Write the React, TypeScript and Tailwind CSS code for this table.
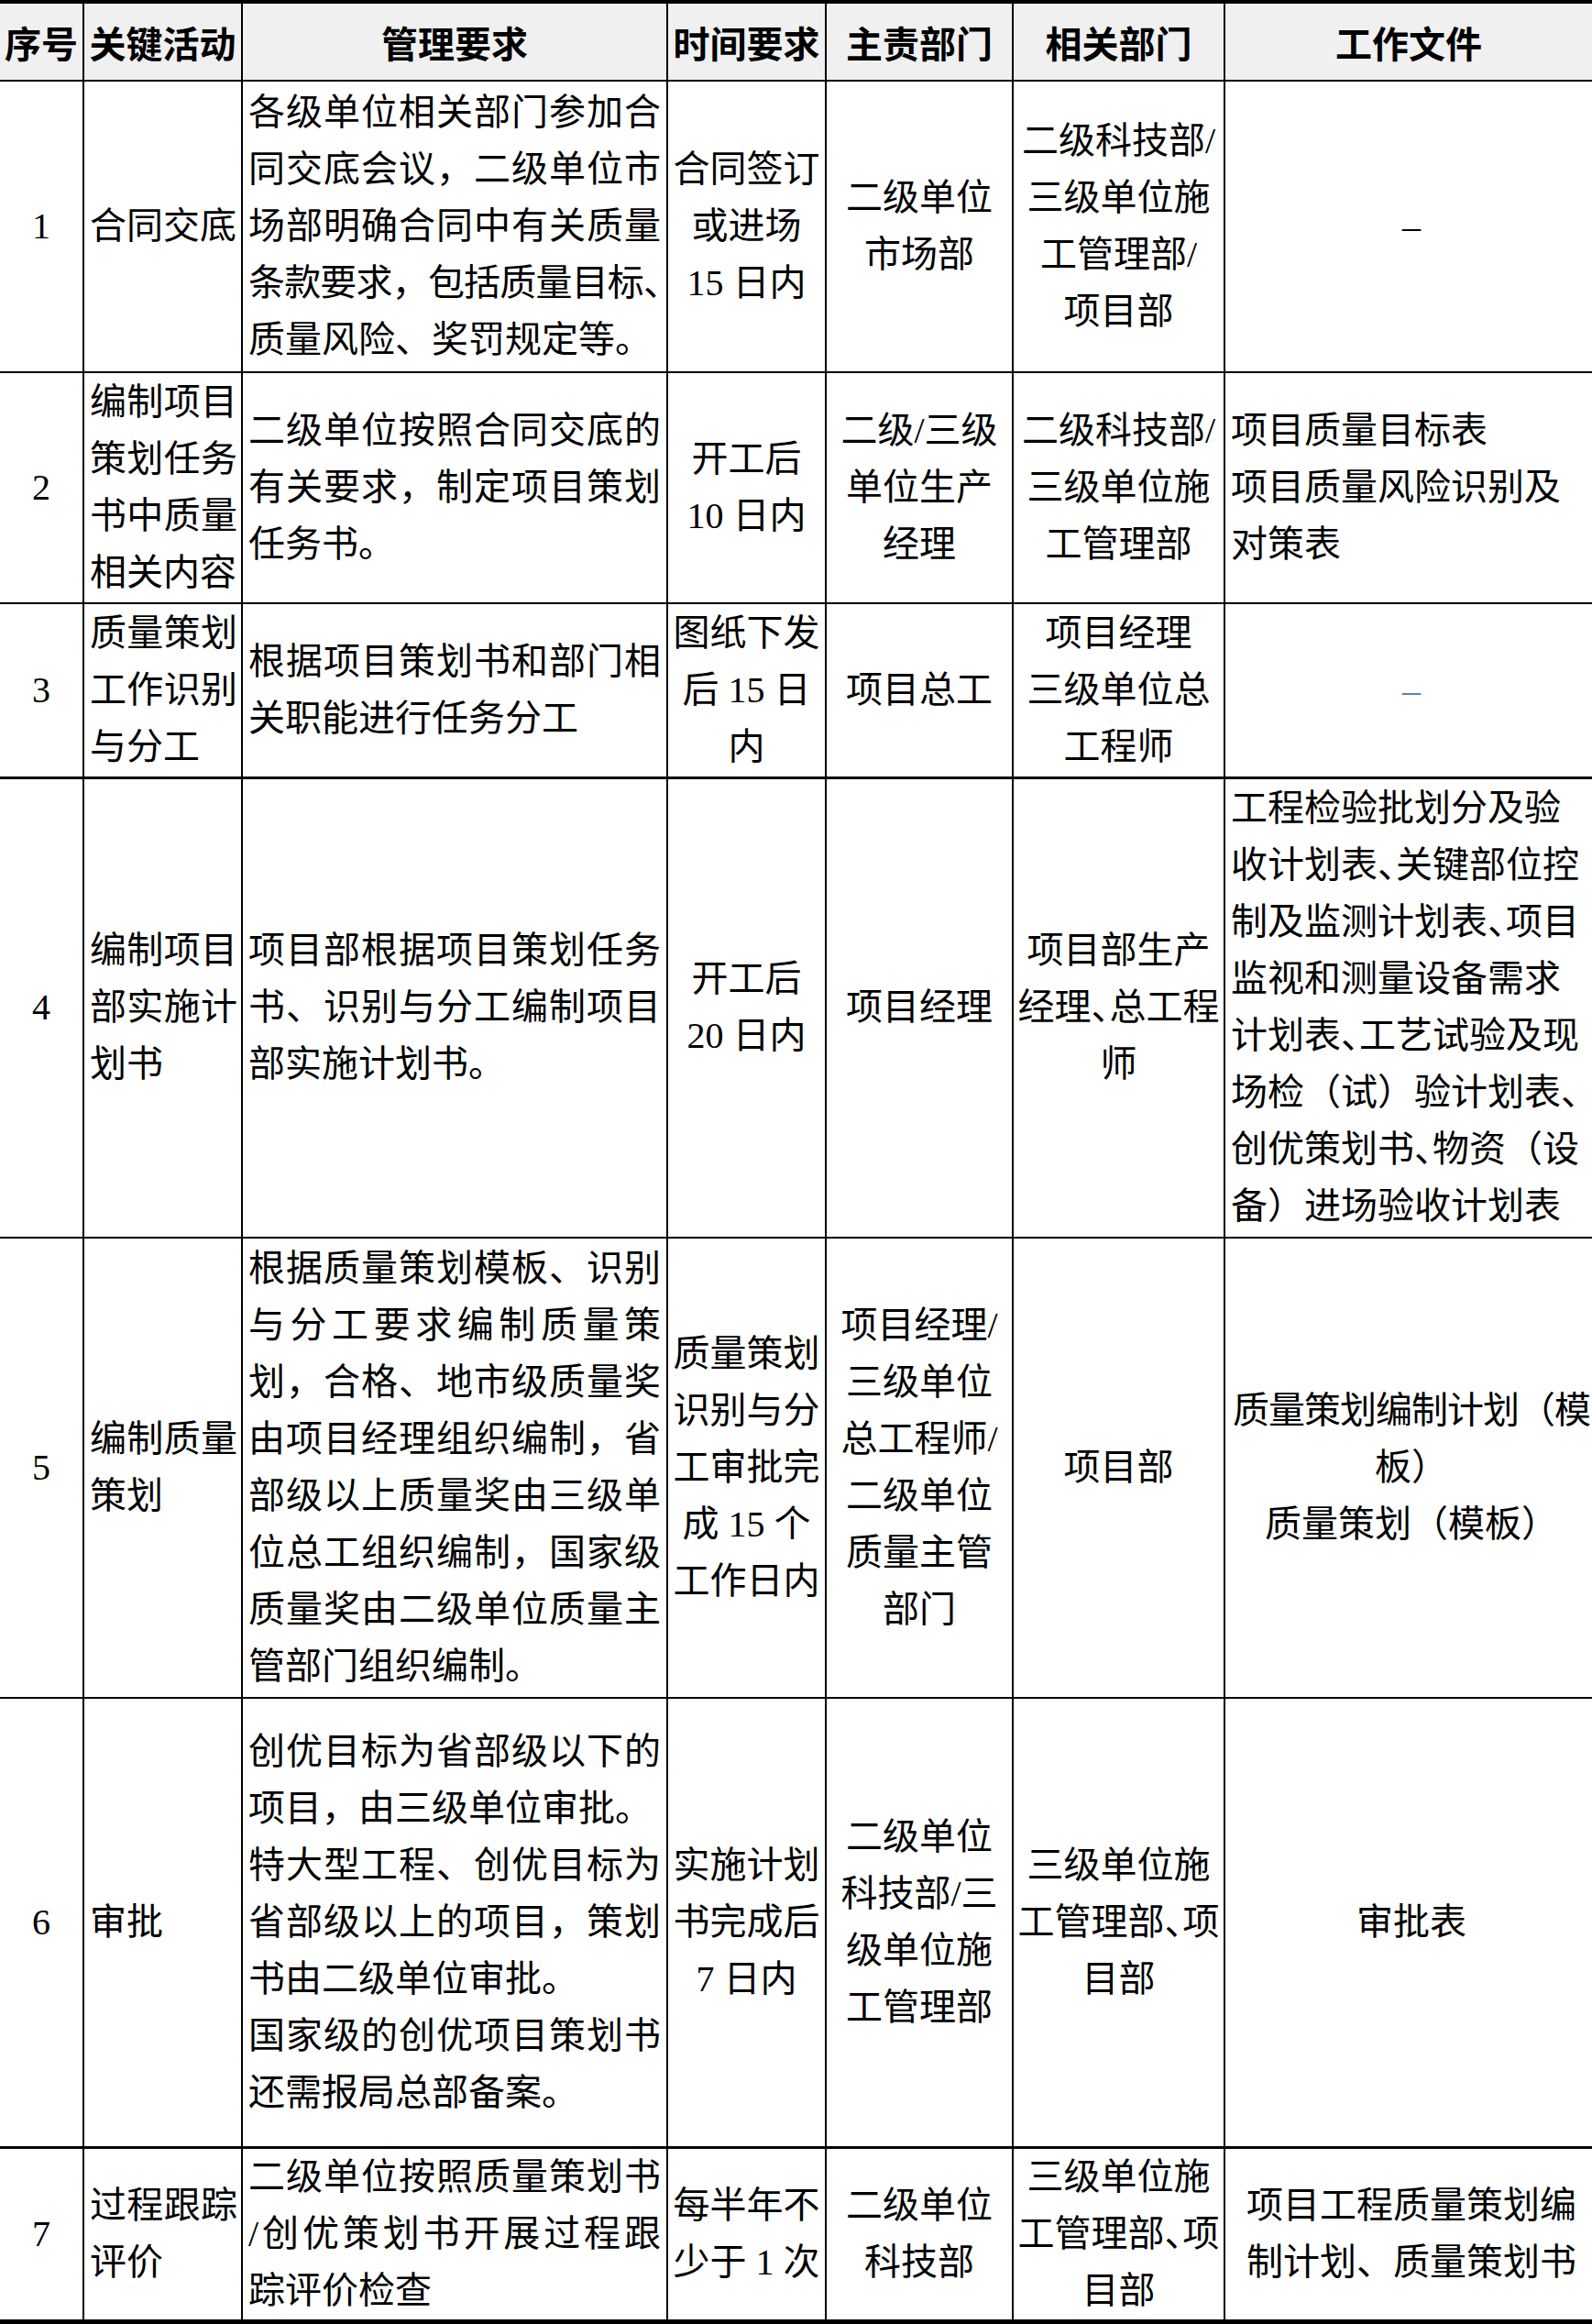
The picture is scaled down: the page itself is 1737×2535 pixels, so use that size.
import React from "react";

interface Row {
  no: string;
  height: string;
  line: string;
  activity: string[];
  requirement: string[];
  time: string[];
  owner: string[];
  related: string[];
  docs: string[];
  docsAlign: "left" | "center";
  docsColor?: string;
}

const HEADERS = ["序号", "关键活动", "管理要求", "时间要求", "主责部门", "相关部门", "工作文件"];

// {x} marks punctuation squeezed to half width, like Word does at line ends.
// A leading ~ tightens the tracking of an overfull line.
const ROWS: Row[] = [
  {
    no: "1",
    height: "h-[318px]",
    line: "border-b-2",
    activity: ["合同交底"],
    requirement: [
      "各级单位相关部门参加合",
      "同交底会议，二级单位市",
      "场部明确合同中有关质量",
      "~条款要求，包括质量目标{、}",
      "质量风险、奖罚规定等。",
    ],
    time: ["合同签订", "或进场", "15 日内"],
    owner: ["二级单位", "市场部"],
    related: ["二级科技部/", "三级单位施", "工管理部/", "项目部"],
    docs: ["–"],
    docsAlign: "center",
  },
  {
    no: "2",
    height: "h-[252px]",
    line: "border-b-2",
    activity: ["编制项目", "策划任务", "书中质量", "相关内容"],
    requirement: ["二级单位按照合同交底的", "有关要求，制定项目策划", "任务书。"],
    time: ["开工后", "10 日内"],
    owner: ["二级/三级", "单位生产", "经理"],
    related: ["二级科技部/", "三级单位施", "工管理部"],
    docs: ["项目质量目标表", "项目质量风险识别及", "对策表"],
    docsAlign: "left",
  },
  {
    no: "3",
    height: "h-[190px]",
    line: "border-b-[3px]",
    activity: ["质量策划", "工作识别", "与分工"],
    requirement: ["根据项目策划书和部门相", "关职能进行任务分工"],
    time: ["图纸下发", "后 15 日", "内"],
    owner: ["项目总工"],
    related: ["项目经理", "三级单位总", "工程师"],
    docs: ["–"],
    docsAlign: "center",
    docsColor: "text-[#5a7fc4]",
  },
  {
    no: "4",
    height: "h-[502px]",
    line: "border-b-2",
    activity: ["编制项目", "部实施计", "划书"],
    requirement: ["项目部根据项目策划任务", "书、识别与分工编制项目", "部实施计划书。"],
    time: ["开工后", "20 日内"],
    owner: ["项目经理"],
    related: ["项目部生产", "经理{、}总工程", "师"],
    docs: [
      "工程检验批划分及验",
      "收计划表{、}关键部位控",
      "制及监测计划表{、}项目",
      "监视和测量设备需求",
      "计划表{、}工艺试验及现",
      "场检（试）验计划表{、}",
      "创优策划书{、}物资（设",
      "备）进场验收计划表",
    ],
    docsAlign: "left",
  },
  {
    no: "5",
    height: "h-[502px]",
    line: "border-b-2",
    activity: ["编制质量", "策划"],
    requirement: [
      "根据质量策划模板、识别",
      "与分工要求编制质量策",
      "划，合格、地市级质量奖",
      "由项目经理组织编制，省",
      "部级以上质量奖由三级单",
      "位总工组织编制，国家级",
      "质量奖由二级单位质量主",
      "管部门组织编制。",
    ],
    time: ["质量策划", "识别与分", "工审批完", "成 15 个", "工作日内"],
    owner: ["项目经理/", "三级单位", "总工程师/", "二级单位", "质量主管", "部门"],
    related: ["项目部"],
    docs: ["~质量策划编制计划（模", "板）", "质量策划（模板）"],
    docsAlign: "center",
  },
  {
    no: "6",
    height: "h-[490px]",
    line: "border-b-[3px]",
    activity: ["审批"],
    requirement: [
      "创优目标为省部级以下的",
      "项目，由三级单位审批。",
      "特大型工程、创优目标为",
      "省部级以上的项目，策划",
      "书由二级单位审批。",
      "国家级的创优项目策划书",
      "还需报局总部备案。",
    ],
    time: ["实施计划", "书完成后", "7 日内"],
    owner: ["二级单位", "科技部/三", "级单位施", "工管理部"],
    related: ["三级单位施", "工管理部{、}项", "目部"],
    docs: ["审批表"],
    docsAlign: "center",
  },
  {
    no: "7",
    height: "h-[190px]",
    line: "border-b-[5px]",
    activity: ["过程跟踪", "评价"],
    requirement: ["二级单位按照质量策划书", "/创优策划书开展过程跟", "踪评价检查"],
    time: ["每半年不", "少于 1 次"],
    owner: ["二级单位", "科技部"],
    related: ["三级单位施", "工管理部{、}项", "目部"],
    docs: ["项目工程质量策划编", "制计划、质量策划书"],
    docsAlign: "center",
  },
];

function renderText(line: string) {
  return line.split(/(\{[^}]+\})/).map((part, i) =>
    part.startsWith("{") ? (
      <span key={i} className="[font-feature-settings:'halt']">
        {part.slice(1, -1)}
      </span>
    ) : (
      <React.Fragment key={i}>{part}</React.Fragment>
    )
  );
}

function Lines({ lines, mode }: { lines: string[]; mode: "justify" | "center" | "left" }) {
  return (
    <>
      {lines.map((raw, i) => {
        const tight = raw.startsWith("~");
        const line = tight ? raw.slice(1) : raw;
        const last = i === lines.length - 1 || line.endsWith("。");
        let cls = "text-left";
        if (mode === "center") cls = "text-center";
        else if (mode === "justify" && !last) cls = "text-justify [text-align-last:justify]";
        return (
          <div key={i} className={`whitespace-nowrap ${cls} ${tight ? "tracking-[-1px]" : ""}`}>
            {renderText(line)}
          </div>
        );
      })}
    </>
  );
}

export default function App() {
  const cell = "border-black border-r-2 align-middle";
  return (
    <div className="w-[1737px] min-h-[2535px] bg-white text-black font-['Liberation_Serif','Noto_Sans_CJK_SC',serif] text-[40px] leading-[62px]">
      <table className="w-[1737px] table-fixed border-collapse">
        <colgroup>
          <col className="w-[91px]" />
          <col className="w-[173px]" />
          <col className="w-[464px]" />
          <col className="w-[173px]" />
          <col className="w-[204px]" />
          <col className="w-[231px]" />
          <col className="w-[401px]" />
        </colgroup>
        <thead>
          <tr className="h-[86px] bg-[#f0f0f0]">
            {HEADERS.map((h, i) => (
              <th
                key={h}
                className={`border-black border-t-[4px] border-b-2 px-0 text-center font-bold font-['Noto_Sans_CJK_SC',sans-serif] ${
                  i < HEADERS.length - 1 ? "border-r-2" : ""
                }`}
              >
                {h}
              </th>
            ))}
          </tr>
        </thead>
        <tbody>
          {ROWS.map((row) => (
            <tr key={row.no} className={row.height}>
              <td className={`${cell} ${row.line} px-[2px] text-center`}>{row.no}</td>
              <td className={`${cell} ${row.line} pl-[6px] pr-[4px]`}>
                <Lines lines={row.activity} mode="justify" />
              </td>
              <td className={`${cell} ${row.line} px-[6px]`}>
                <Lines lines={row.requirement} mode="justify" />
              </td>
              <td className={`${cell} ${row.line} px-[4px]`}>
                <Lines lines={row.time} mode="center" />
              </td>
              <td className={`${cell} ${row.line} px-[5px]`}>
                <Lines lines={row.owner} mode="center" />
              </td>
              <td className={`${cell} ${row.line} px-[4px]`}>
                <Lines lines={row.related} mode="center" />
              </td>
              <td className={`border-black align-middle ${row.line} pl-[6px] pr-0 ${row.docsColor ?? ""}`}>
                <Lines lines={row.docs} mode={row.docsAlign} />
              </td>
            </tr>
          ))}
        </tbody>
      </table>
    </div>
  );
}
